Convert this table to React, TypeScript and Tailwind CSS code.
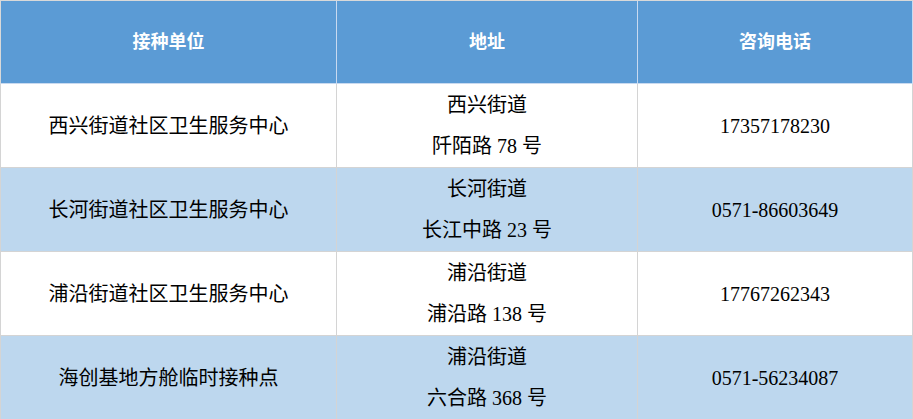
import React from "react";

const rows = [
  { name: "西兴街道社区卫生服务中心", a1: "西兴街道", a2: "阡陌路 78 号", phone: "17357178230", alt: false },
  { name: "长河街道社区卫生服务中心", a1: "长河街道", a2: "长江中路 23 号", phone: "0571-86603649", alt: true },
  { name: "浦沿街道社区卫生服务中心", a1: "浦沿街道", a2: "浦沿路 138 号", phone: "17767262343", alt: false },
  { name: "海创基地方舱临时接种点", a1: "浦沿街道", a2: "六合路 368 号", phone: "0571-56234087", alt: true },
];

export default function App() {
  const font = { fontFamily: '"Liberation Serif", "Noto Sans CJK SC", serif' };
  return (
    <div className="w-[913px] h-[419px] overflow-hidden bg-white" style={font}>
      <div className="grid grid-cols-[337px_301px_275px] border-t border-[#d9d9d9]">
        {["接种单位", "地址", "咨询电话"].map((h, i) => (
          <div
            key={h}
            className={`h-[83px] flex items-center justify-center bg-[#5b9bd5] border-b border-r border-[#c9daf0] text-white text-[18px] font-bold ${i === 0 ? "border-l border-l-[#d9d9d9]" : ""}`}
          >
            {h}
          </div>
        ))}
        {rows.map((r, idx) => {
          const bg = r.alt ? "bg-[#bdd7ee]" : "bg-white";
          return (
            <React.Fragment key={idx}>
              <div className={`h-[84px] flex items-center justify-center border-l border-b border-r border-[#d4d4d4] ${bg} text-[20px] text-black`}>
                {r.name}
              </div>
              <div className={`h-[84px] flex flex-col items-center justify-center border-b border-r border-[#d4d4d4] ${bg} text-[20px] leading-[41px] text-black`}>
                <span>{r.a1}</span>
                <span>{r.a2}</span>
              </div>
              <div className={`h-[84px] flex items-center justify-center border-b border-r border-[#d4d4d4] ${bg} text-[20px] text-black`}>
                {r.phone}
              </div>
            </React.Fragment>
          );
        })}
      </div>
    </div>
  );
}
